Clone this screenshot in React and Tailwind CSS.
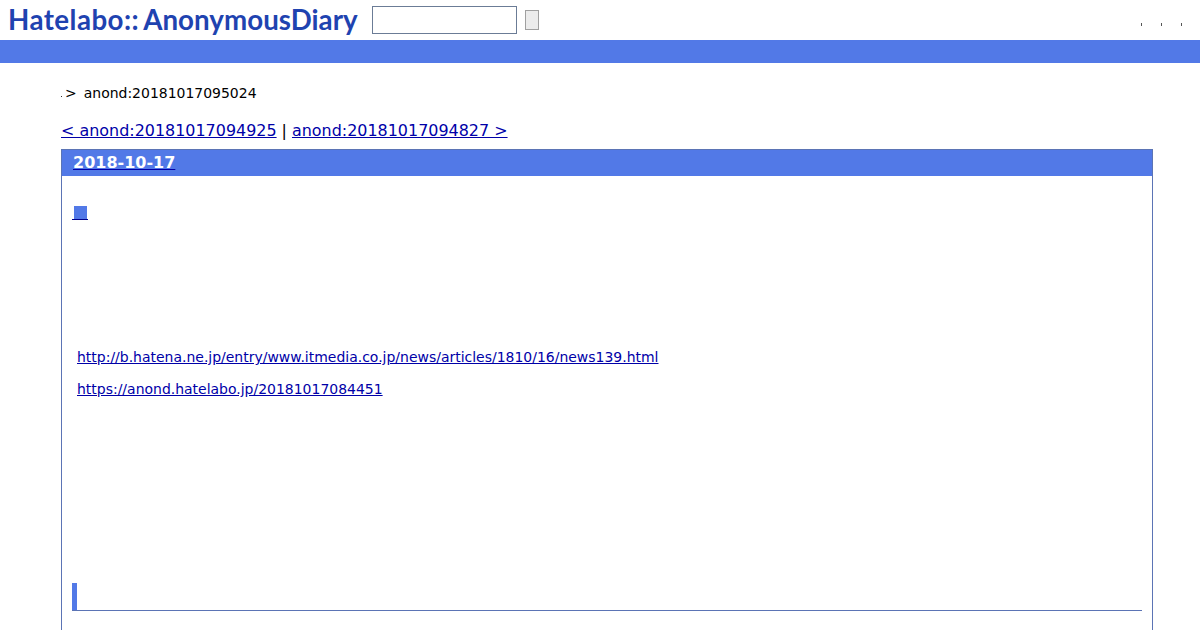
export default function App() {
  const dejavu = "font-['DejaVu_Sans',sans-serif]";
  return (
    <div className={`h-[630px] overflow-hidden bg-white text-black ${dejavu}`}>
      <header className="flex h-10 items-center pl-[8px]">
        <a className="w-[364px] font-['Lato',sans-serif] text-[27.7px] leading-10 font-bold tracking-[0.45px] whitespace-nowrap text-[#1f43b0]">
          Hatelabo::<span className="ml-[4px] tracking-[0.05px]">AnonymousDiary</span>
        </a>
        <input className="box-border h-[28px] w-[145px] border border-[#6b7c96] bg-white" />
        <button className="ml-2 h-5 w-[14px] border border-[#a0a0a0] bg-[#ececec]" />
        <div className="ml-auto flex gap-[19px] pt-[9px] pr-[18px]">
          <span className="h-[3px] w-px bg-[#555]" />
          <span className="h-[3px] w-px bg-[#555]" />
          <span className="h-[3px] w-px bg-[#555]" />
        </div>
      </header>
      <div className="h-[23px] bg-[#5279e7]" />
      <main className="pr-[47px] pl-[61px]">
        <div className="flex h-[54px] items-center pt-[6px] text-[13.98px]">
          <span className="mt-[7px] h-px w-px self-center bg-[#333]" />
          <span className="ml-[3px]">&gt;</span>
          <span className="ml-[7px]">anond:20181017095024</span>
        </div>
        <div className="flex h-[32px] items-start gap-[5px] pt-[4px] text-[15.95px] leading-[19px]">
          <a className="text-[#0000a8] underline">&lt; anond:20181017094925</a>
          <span>|</span>
          <a className="text-[#0000a8] underline">anond:20181017094827 &gt;</a>
        </div>
        <section className="border border-[#5b74b5]">
          <h2 className="flex h-[26px] items-center bg-[#5279e7] pl-[11px] text-[16px] font-bold text-white">
            <a className="underline decoration-[#0000a8]">2018-10-17</a>
          </h2>
          <div className="h-[500px] px-[10px]">
            <div className="mt-[28px] flex h-4 items-end">
              <a className="flex h-[14px] w-[16px] justify-end border-b border-[#00008b] pr-[1px]">
                <span className="h-[13px] w-[13px] bg-[#5279e7]" />
              </a>
            </div>
            <div className="flex flex-col gap-[13px] pt-[128px] pl-[5px] text-[13.98px] leading-[19px] text-[#0000a8]">
              <a className="underline">http://b.hatena.ne.jp/entry/www.itmedia.co.jp/news/articles/1810/16/news139.html</a>
              <a className="underline">https://anond.hatelabo.jp/20181017084451</a>
            </div>
            <div className="mt-[184px] h-[28px] border-b border-[#5b74b5]">
              <div className="h-[27px] w-[5px] bg-[#5279e7]" />
            </div>
          </div>
        </section>
      </main>
    </div>
  );
}
